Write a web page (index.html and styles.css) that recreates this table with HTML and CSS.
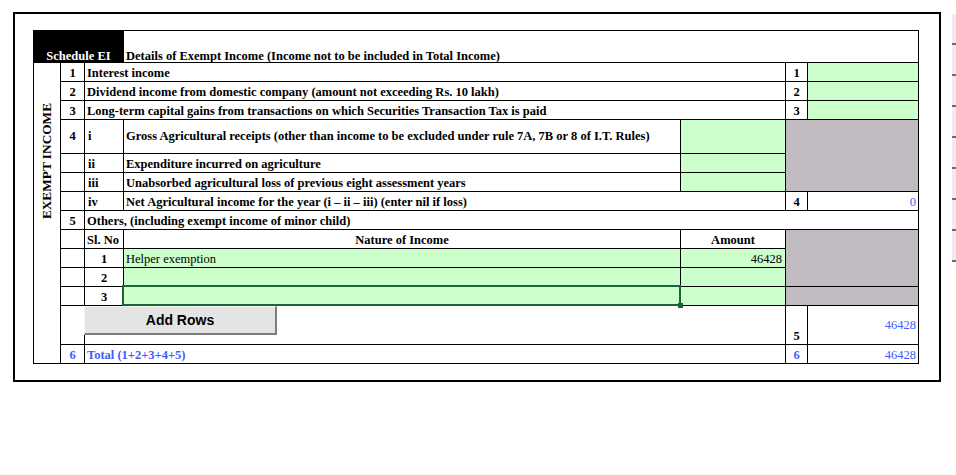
FILE: index.html
```html
<!DOCTYPE html>
<html>
<head>
<meta charset="utf-8">
<title>Schedule EI</title>
<link rel="stylesheet" href="styles.css">
</head>
<body>
<div class="page">
  <div class="sheet">
    <div class="grid">
      <div class="cell black s3 c hdr">Schedule EI</div>
      <div class="cell s4 hdr">Details of Exempt Income (Income not to be included in Total Income)</div>

      <div class="cell vlabel"><span class="vtext">EXEMPT INCOME</span></div>
      <div class="cell c">1</div>
      <div class="cell s3">Interest income</div>
      <div class="cell c">1</div>
      <div class="cell green"></div>

      <div class="cell c">2</div>
      <div class="cell s3">Dividend income from domestic company (amount not exceeding Rs. 10 lakh)</div>
      <div class="cell c">2</div>
      <div class="cell green"></div>

      <div class="cell c">3</div>
      <div class="cell s3">Long-term capital gains from transactions on which Securities Transaction Tax is paid</div>
      <div class="cell c">3</div>
      <div class="cell green"></div>

      <div class="cell c m">4</div>
      <div class="cell m sub">i</div>
      <div class="cell m">Gross Agricultural receipts (other than income to be excluded under rule 7A, 7B or 8 of I.T. Rules)</div>
      <div class="cell green"></div>
      <div class="cell gray s2 r3"></div>

      <div class="cell"></div>
      <div class="cell sub">ii</div>
      <div class="cell">Expenditure incurred on agriculture</div>
      <div class="cell green"></div>

      <div class="cell"></div>
      <div class="cell sub">iii</div>
      <div class="cell">Unabsorbed agricultural loss of previous eight assessment years</div>
      <div class="cell green"></div>

      <div class="cell"></div>
      <div class="cell sub">iv</div>
      <div class="cell s2">Net Agricultural income for the year (i &ndash; ii &ndash; iii) (enter nil if loss)</div>
      <div class="cell c">4</div>
      <div class="cell r num blue">0</div>

      <div class="cell c">5</div>
      <div class="cell s5">Others, (including exempt income of minor child)</div>

      <div class="cell"></div>
      <div class="cell">Sl. No</div>
      <div class="cell c">Nature of Income</div>
      <div class="cell c">Amount</div>
      <div class="cell gray s2 r3"></div>

      <div class="cell"></div>
      <div class="cell c">1</div>
      <div class="cell green num">Helper exemption</div>
      <div class="cell green r num amt">46428</div>

      <div class="cell"></div>
      <div class="cell c">2</div>
      <div class="cell green"></div>
      <div class="cell green"></div>

      <div class="cell"></div>
      <div class="cell c">3</div>
      <div class="cell green selected"><span class="sel-box"></span><span class="sel-handle"></span></div>
      <div class="cell green"></div>
      <div class="cell gray s2"></div>

      <div class="cell"></div>
      <div class="cell s3 btn-host"><button class="add-rows" type="button">Add Rows</button></div>
      <div class="cell c">5</div>
      <div class="cell r m num blue">46428</div>

      <div class="cell c blue">6</div>
      <div class="cell s3 blue">Total (1+2+3+4+5)</div>
      <div class="cell c blue">6</div>
      <div class="cell r num blue">46428</div>
    </div>
  </div>
  <div class="strip">
    <div class="seg"></div>
    <div class="seg"></div>
    <div class="seg"></div>
    <div class="seg"></div>
    <div class="seg"></div>
    <div class="seg"></div>
    <div class="seg"></div>
    <div class="seg"></div>
  </div>
</div>
</body>
</html>
```
FILE: styles.css
```css
html, body {
  margin: 0;
  padding: 0;
  background: #ffffff;
}

body {
  width: 956px;
  height: 475px;
  overflow: hidden;
  font-family: "Liberation Serif", "Times New Roman", serif;
  font-size: 12.5px;
  color: #000;
}

.page {
  display: flex;
  align-items: flex-start;
  padding: 12px 0 0 13px;
}

.sheet {
  box-sizing: border-box;
  width: 928px;
  height: 370px;
  border: 2px solid #000;
  padding: 16px 20px 16px 18px;
}

.grid {
  display: grid;
  grid-template-columns: 27px 24px 39px 557px 105px 22px 111px;
  grid-template-rows: 32px 19px 19px 19px 34px 19px 19px 19px 19px 19px 19px 19px 19px 39px 19px;
  border-top: 1px solid #000;
  border-left: 1px solid #000;
  width: 886px;
  box-sizing: border-box;
}

.cell {
  box-sizing: border-box;
  border-right: 1px solid #000;
  border-bottom: 1px solid #000;
  display: flex;
  align-items: flex-end;
  padding: 0 2px 1px 2px;
  line-height: 14px;
  font-weight: bold;
  white-space: nowrap;
  min-width: 0;
}

.s2 { grid-column: span 2; }
.s3 { grid-column: span 3; }
.s4 { grid-column: span 4; }
.s5 { grid-column: span 5; }
.r3 { grid-row: span 3; }

.c { justify-content: center; }
.r { justify-content: flex-end; }
.m { align-items: center; }

.sub { padding-left: 3px; }

.hdr {
  line-height: 12px;
  padding-bottom: 0;
}

.black {
  background: #000;
  color: #fff;
}

.green { background: #ccffcc; }

.gray { background: #c0bbc0; }

.num { font-weight: normal; }
.amt { padding-right: 3px; }

.blue { color: #3f5dff; }

.vlabel {
  grid-row: span 14;
  justify-content: center;
  align-items: flex-end;
  padding: 0 0 144px 0;
}

.vtext {
  writing-mode: vertical-rl;
  transform: rotate(180deg);
  font-size: 13.3px;
  line-height: 14px;
  font-weight: bold;
}

.selected { position: relative; }

.sel-box {
  position: absolute;
  left: -2px;
  top: -2px;
  right: -1px;
  bottom: -1px;
  border: 2px solid #1d6339;
}

.sel-handle {
  position: absolute;
  right: -3px;
  bottom: -3px;
  width: 5px;
  height: 5px;
  background: #1d6339;
}

.btn-host { position: relative; }

.add-rows {
  position: absolute;
  left: -1px;
  top: 0;
  width: 193px;
  height: 29px;
  box-sizing: border-box;
  margin: 0;
  padding: 0;
  border-top: 1px solid #f4f4f4;
  border-left: 1px solid #f4f4f4;
  border-right: 2px solid #7d7d7d;
  border-bottom: 2px solid #7d7d7d;
  background: #e4e4e4;
  font-family: "Liberation Sans", Arial, sans-serif;
  font-weight: bold;
  font-size: 14px;
  color: #000;
  text-align: center;
  line-height: 26px;
}

.strip {
  display: flex;
  flex-direction: column;
  margin-left: 11px;
  margin-top: 2px;
  width: 4px;
}

.seg {
  height: 31px;
  box-sizing: border-box;
  border-bottom: 2px solid #6e6878;
  background: #f1ebf1;
}
```
